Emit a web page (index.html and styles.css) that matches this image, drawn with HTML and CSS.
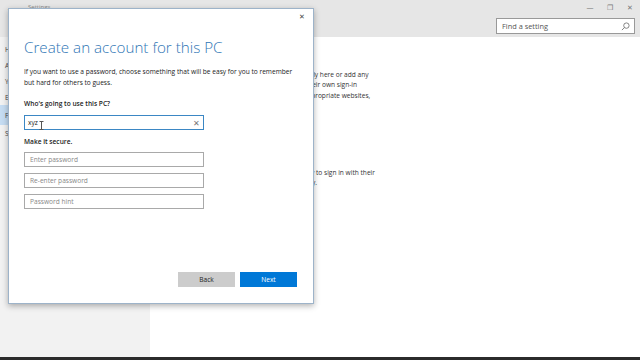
FILE: index.html
```html
<!DOCTYPE html>
<html>
<head>
  <title>Settings - Create an account</title>
  <link rel="stylesheet" href="styles.css">
</head>
<body>
  <div class="app">
    <!-- Title bar with search -->
    <div class="titlebar">
      <div class="caption">
        <span class="back">&#8592;</span>
        <span class="app-name">Settings</span>
        <div class="win-buttons">
          <span>&#8212;</span>
          <span>&#10064;</span>
          <span>&#10005;</span>
        </div>
      </div>
      <div class="search-row">
        <div class="search">
          <span>Find a setting</span>
          <svg width="9" height="9" viewBox="0 0 10 10"><circle cx="6" cy="4" r="3" fill="none" stroke="#777" stroke-width="1"/><line x1="4" y1="6" x2="1" y2="9" stroke="#777" stroke-width="1"/></svg>
        </div>
      </div>
    </div>

    <div class="main">
      <div class="sidebar">
        <div class="side-item">Home</div>
        <div class="side-item">Accounts</div>
        <div class="side-item">Your info</div>
        <div class="side-item">Email &amp; app accounts</div>
        <div class="side-item active">Family &amp; other users</div>
        <div class="side-item">Sync your settings</div>
      </div>
      <div class="content">
        <p class="content-text">Your family members can sign in to this PC directly here or add any<br>
        other people to this PC so that they can all get their own sign-in<br>
        settings, while your kids can only get into age-appropriate websites,<br>apps, and games.</p>
        <p class="content-text lower">Allow people who are not part of your own family to sign in with their<br>own accounts. This won't add them to your family.</p>
      </div>
    </div>
    <div class="taskbar"></div>

    <!-- Create account dialog -->
    <div class="dialog">
      <div class="dialog-close">&#10005;</div>
      <h1>Create an account for this PC</h1>
      <p class="intro">If you want to use a password, choose something that will be easy for you to remember<br>but hard for others to guess.</p>

      <div class="label">Who's going to use this PC?</div>
      <div class="field focused">
        <span class="value">xyz</span>
        <svg class="caret" width="5" height="9" viewBox="0 0 5 9"><path d="M0.5 0.5h4M2.5 0.5v8M0.5 8.5h4" fill="none" stroke="#555" stroke-width="1"/></svg>
        <span class="clear">&#10005;</span>
      </div>

      <div class="label secure">Make it secure.</div>
      <div class="field"><span class="hint">Enter password</span></div>
      <div class="field"><span class="hint">Re-enter password</span></div>
      <div class="field"><span class="hint">Password hint</span></div>

      <div class="actions">
        <button class="btn btn-back">Back</button>
        <button class="btn btn-next">Next</button>
      </div>
    </div>
  </div>
</body>
</html>
```

FILE: styles.css
```css
/* Common styles */
* {
  margin: 0;
  padding: 0;
  box-sizing: border-box;
}

body {
  font-family: "Open Sans", "Noto Sans", Arial, sans-serif;
  background-color: #ffffff;
  color: #333;
  width: 640px;
  height: 360px;
  overflow: hidden;
}

.app {
  position: relative;
  width: 640px;
  height: 360px;
  display: flex;
  flex-direction: column;
}

/* Title bar */
.titlebar {
  height: 37px;
  background-color: #e6e6e6;
}

.caption {
  display: flex;
  align-items: center;
  height: 14px;
  font-size: 6px;
  color: #888;
  padding-left: 6px;
}

.caption .back {
  font-size: 8px;
  margin-right: 14px;
}

.win-buttons {
  margin-left: auto;
  display: flex;
  font-size: 7px;
  color: #777;
}

.win-buttons span {
  width: 20px;
  text-align: center;
}

.search-row {
  display: flex;
  justify-content: flex-end;
  padding: 4px 5px 0 0;
}

.search {
  width: 139px;
  height: 16px;
  background: #fff;
  border: 1px solid #999;
  display: flex;
  align-items: center;
  justify-content: space-between;
  padding: 0 4px 0 5px;
  font-size: 7.4px;
  color: #555;
}

/* Main area */
.main {
  flex: 1;
  display: flex;
}

.sidebar {
  width: 150px;
  background-color: #f2f2f2;
  padding-top: 4px;
}

.side-item {
  font-size: 6.6px;
  color: #444;
  padding: 4px 5px;
  height: 16px;
}

.side-item.active {
  background-color: #c5dcf2;
  height: 20px;
  padding-top: 6px;
}

.content {
  flex: 1;
  padding: 33px 0 0 13px;
}

.content-text {
  font-size: 6.6px;
  line-height: 10.4px;
  color: #333;
  white-space: nowrap;
}

.content-text.lower {
  margin-top: 56px;
}

.taskbar {
  height: 3px;
  background-color: #2b2b2b;
}

/* Dialog overlay */
.dialog {
  position: absolute;
  left: 8px;
  top: 8px;
  width: 306px;
  height: 296px;
  background: #fff;
  border: 1px solid #9db3c9;
  box-shadow: 0 2px 6px rgba(0, 0, 0, 0.3);
  padding: 28px 16px 0 15px;
  display: flex;
  flex-direction: column;
}

.dialog-close {
  position: absolute;
  right: 8px;
  top: 3px;
  font-size: 7px;
  color: #444;
}

.dialog h1 {
  font-weight: 300;
  font-size: 15.2px;
  color: #2f76b5;
  line-height: 20px;
}

.intro {
  margin-top: 10px;
  font-size: 6.6px;
  line-height: 10.5px;
  color: #222;
  white-space: nowrap;
}

.label {
  margin-top: 11px;
  font-size: 6.6px;
  line-height: 10px;
  font-weight: 600;
  color: #222;
}

.label.secure {
  margin-top: 7px;
}

.field {
  width: 180px;
  height: 15px;
  border: 1px solid #a9a9a9;
  margin-top: 5px;
  display: flex;
  align-items: center;
  padding-left: 5px;
  font-size: 6.6px;
}

.field + .field {
  margin-top: 6px;
}

.field.focused {
  border-color: #3b87c4;
  margin-top: 6px;
  padding-left: 3px;
}

.value {
  color: #222;
}

.caret {
  margin-left: 1px;
  margin-top: 6px;
}

.clear {
  margin-left: auto;
  margin-right: 3px;
  color: #777;
  font-size: 8px;
}

.hint {
  color: #888;
}

.actions {
  margin-top: auto;
  margin-bottom: 16px;
  display: flex;
  justify-content: flex-end;
  gap: 5px;
}

.btn {
  width: 57px;
  height: 15px;
  border: none;
  font-family: inherit;
  font-size: 6.6px;
}

.btn-back {
  background-color: #cccccc;
  color: #222;
}

.btn-next {
  background-color: #0078d7;
  color: #fff;
}
```
